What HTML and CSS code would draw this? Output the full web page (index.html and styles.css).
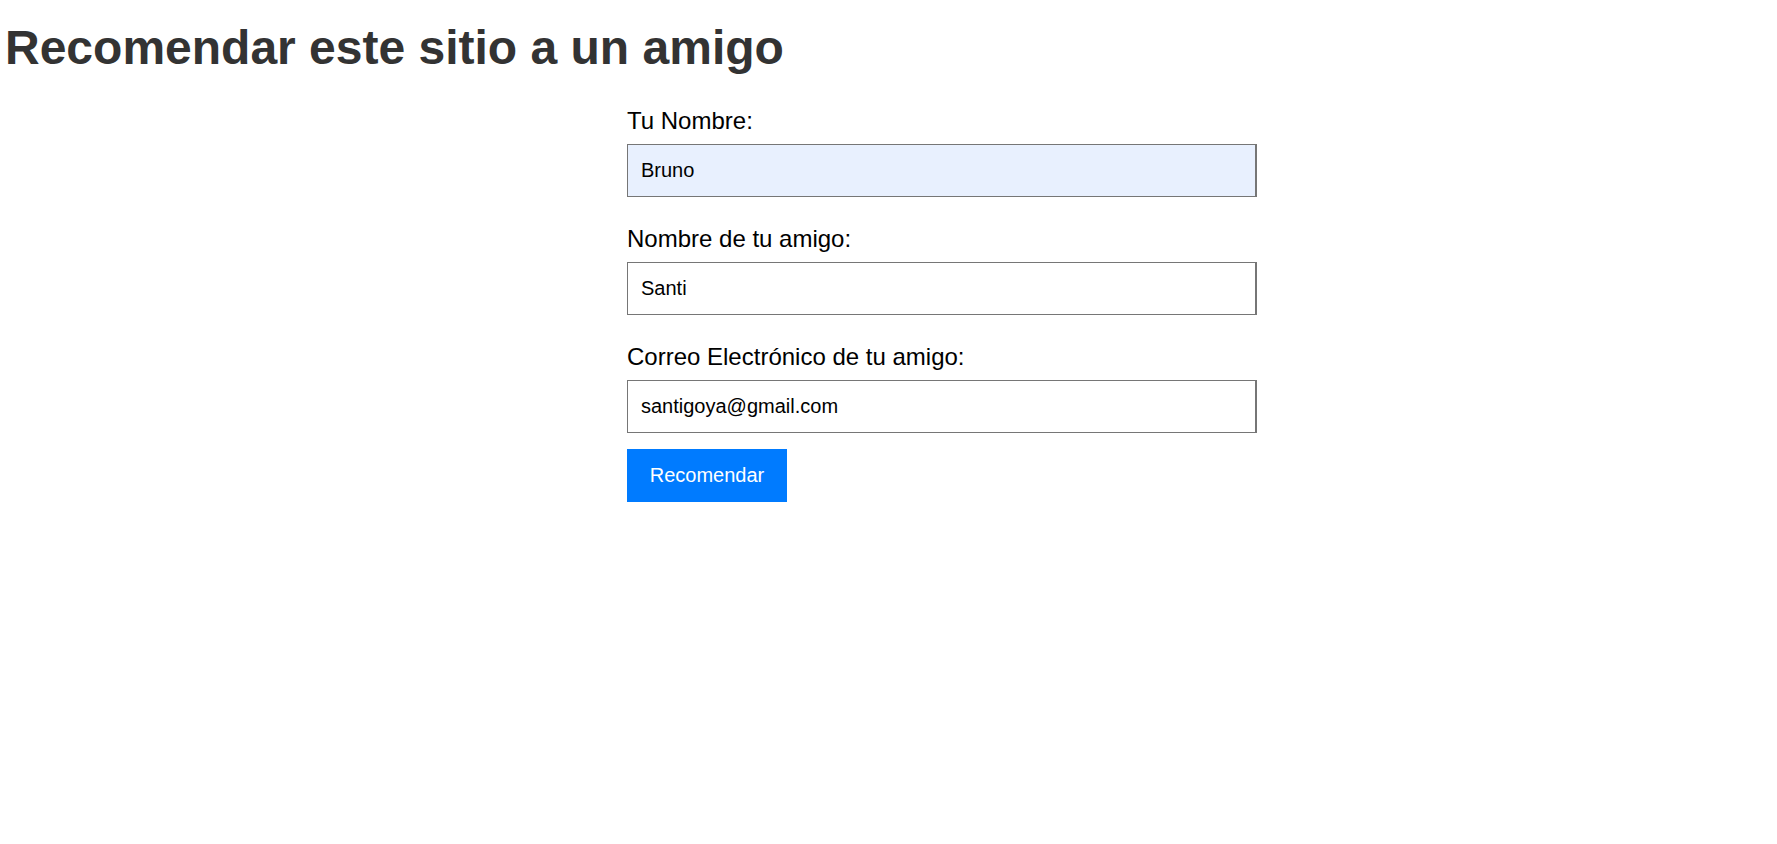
FILE: index.html
```html
<!DOCTYPE html>
<html lang="es">
<head>
<meta charset="utf-8">
<title>Recomendar este sitio a un amigo</title>
<link rel="stylesheet" href="styles.css">
</head>
<body>
<h1 class="title">Recomendar este sitio a un amigo</h1>
<form class="form">
  <div class="field">
    <label class="label" for="nombre">Tu Nombre:</label>
    <input class="input input-filled" id="nombre" type="text" value="Bruno">
  </div>
  <div class="field">
    <label class="label" for="amigo">Nombre de tu amigo:</label>
    <input class="input" id="amigo" type="text" value="Santi">
  </div>
  <div class="field">
    <label class="label" for="correo">Correo Electrónico de tu amigo:</label>
    <input class="input" id="correo" type="email" value="santigoya@gmail.com">
  </div>
  <button class="button" type="button">Recomendar</button>
</form>
</body>
</html>
```
FILE: styles.css
```css
html, body {
  margin: 0;
  padding: 0;
  background: #ffffff;
}

body {
  font-family: "Liberation Sans", Arial, sans-serif;
  color: #000;
}

.title {
  margin: 20px 0 0 5px;
  font-size: 48px;
  line-height: 56px;
  font-weight: bold;
  color: #333333;
}

.form {
  width: 630px;
  margin: 31px 0 0 calc(50% - 261.5px);
  display: flex;
  flex-direction: column;
  align-items: flex-start;
}

.field {
  display: flex;
  flex-direction: column;
  width: 100%;
  margin-bottom: 28px;
}

.field:last-of-type {
  margin-bottom: 16px;
}

.label {
  font-size: 24px;
  line-height: 28px;
  margin-bottom: 9px;
}

.input {
  box-sizing: border-box;
  width: 630px;
  height: 53px;
  margin: 0;
  padding: 0 13px;
  border: 1px solid #767676;
  border-right-width: 2px;
  border-radius: 0;
  background: #ffffff;
  font-family: "Liberation Sans", Arial, sans-serif;
  font-size: 20px;
  color: #000;
  outline: none;
}

.input-filled {
  background: #e8f0fe;
}

.button {
  box-sizing: border-box;
  width: 160px;
  height: 53px;
  margin: 0;
  padding: 0;
  border: none;
  border-radius: 0;
  background: #007bff;
  color: #ffffff;
  font-family: "Liberation Sans", Arial, sans-serif;
  font-size: 20px;
  cursor: pointer;
}
```
